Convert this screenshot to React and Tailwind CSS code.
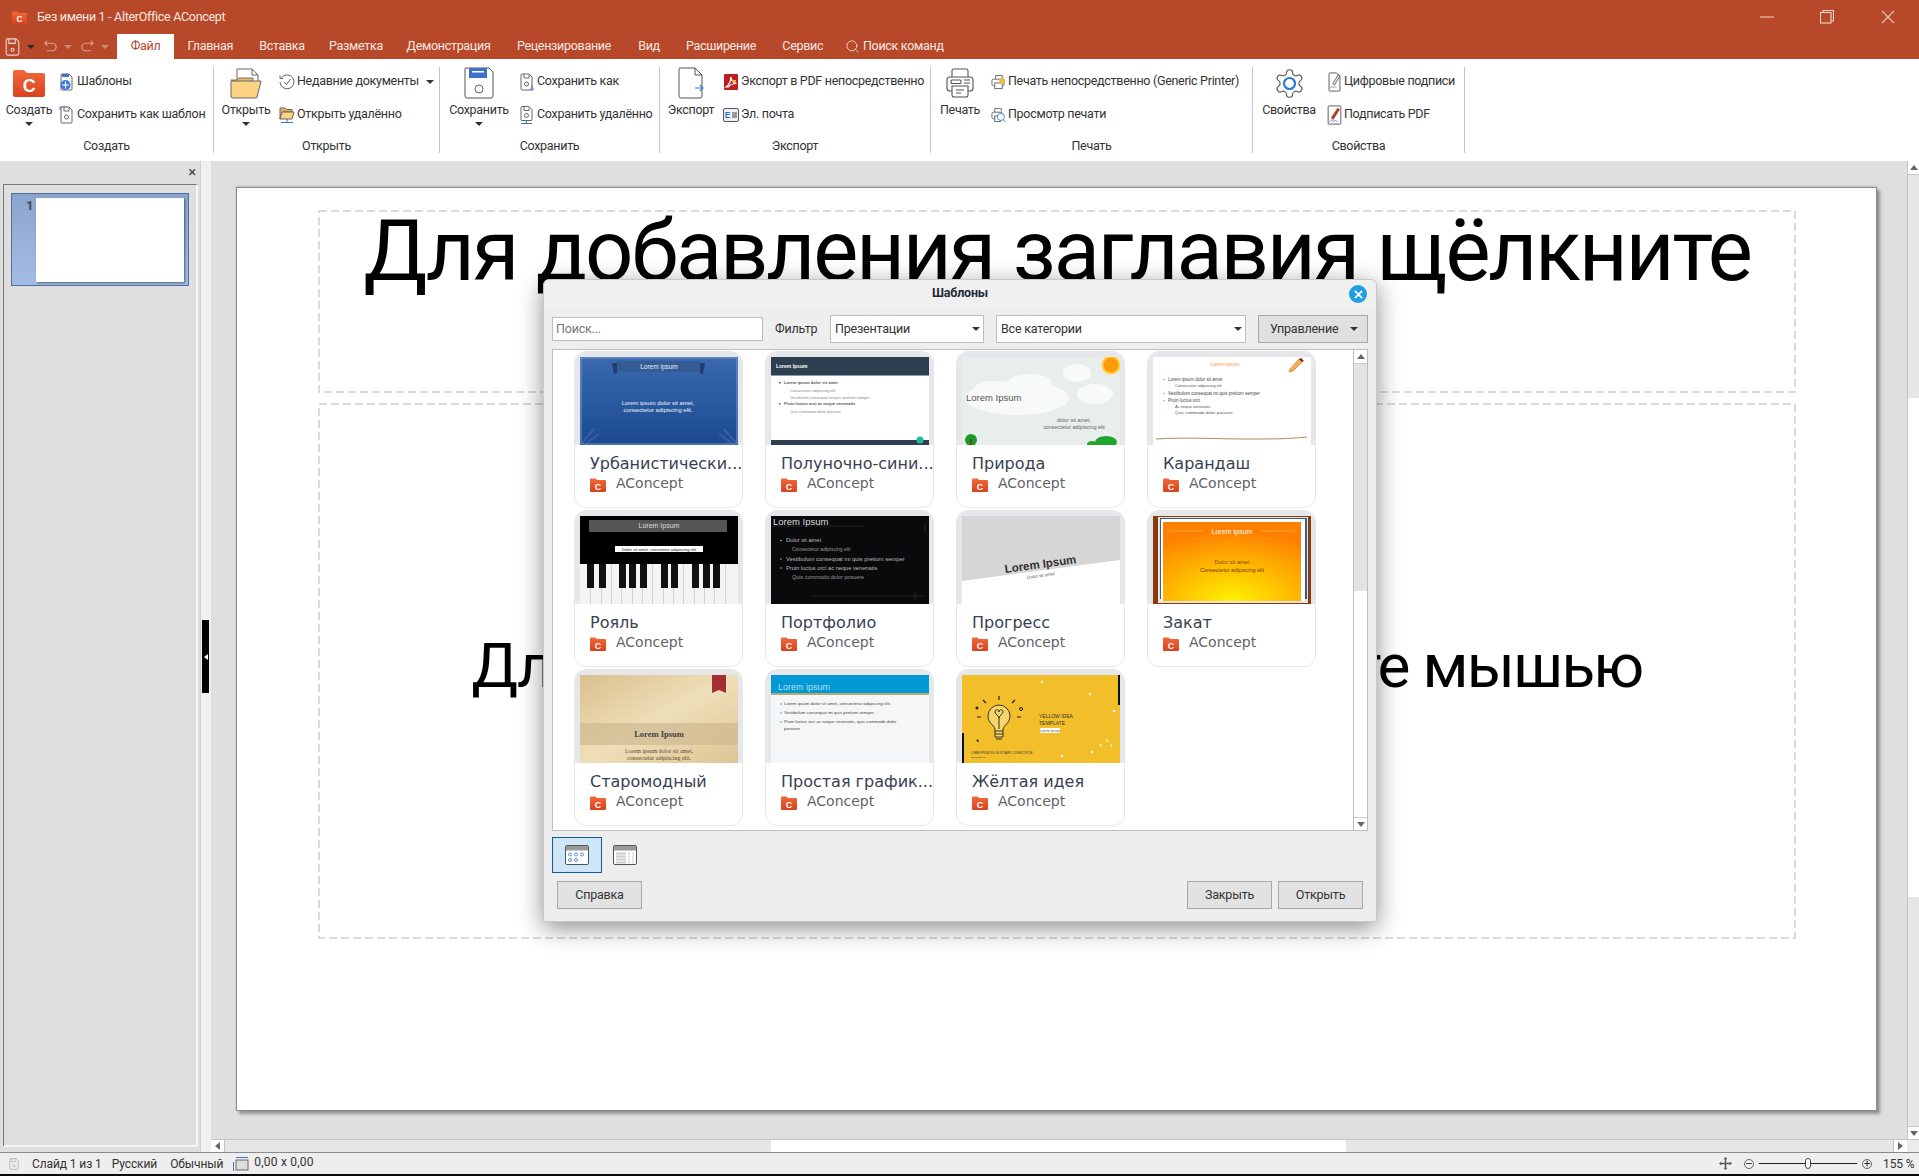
import React, { useId } from "react";
import { Search } from "lucide-react";

// ---------- icons ----------
const Logo = ({ className }) => {
  const id = useId();
  return (
    <svg viewBox="0 0 32 28" className={className}>
      <defs>
        <linearGradient id={id} x1="0" y1="0" x2="0" y2="1">
          <stop offset="0" stopColor="#f0693a" />
          <stop offset="1" stopColor="#d9421d" />
        </linearGradient>
      </defs>
      <path d="M0 3a2 2 0 0 1 2-2h9l3 3h16a2 2 0 0 1 2 2v20a2 2 0 0 1-2 2H2a2 2 0 0 1-2-2z" fill={`url(#${id})`} />
      <text x="16" y="23" textAnchor="middle" fontSize="18" fontWeight="700" fill="#fff" fontFamily="Liberation Sans, sans-serif">C</text>
    </svg>
  );
};

const Caret = ({ className = "" }) => (
  <span className={`inline-block w-0 h-0 border-x-[4px] border-x-transparent border-t-[4px] border-t-[#333] ${className}`} />
);

const SaveSmall = ({ stroke = "#fff", className }) => (
  <svg viewBox="0 0 16 20" className={className} fill="none" stroke={stroke} strokeWidth="1.2">
    <path d="M2 1h10l3 3v13a2 2 0 0 1-2 2H3a2 2 0 0 1-2-2V2a1 1 0 0 1 1-1z" />
    <path d="M4 1v5h7V1" />
    <circle cx="8" cy="13" r="1.7" />
  </svg>
);

const UndoIcon = ({ flip }) => (
  <svg viewBox="0 0 16 14" className={`w-[15px] h-[14px] ${flip ? "-scale-x-100" : ""}`} fill="none" stroke="#dd9c87" strokeWidth="1.3">
    <path d="M2 3h8a4 4 0 0 1 0 8H4" />
    <path d="M4.5 0.5 2 3l2.5 2.5" />
  </svg>
);

const BigSave = () => (
  <svg viewBox="0 0 30 32" className="w-[30px] h-[32px]">
    <path d="M2 1h23l4 4v24a2 2 0 0 1-2 2H3a2 2 0 0 1-2-2V2a1 1 0 0 1 1-1z" fill="#fff" stroke="#555" />
    <rect x="5" y="1" width="18" height="10" fill="#3f72c8" />
    <rect x="8" y="4" width="12" height="1.5" fill="#fff" />
    <circle cx="15" cy="22" r="4" fill="#fff" stroke="#666" />
  </svg>
);

const BigOpen = () => (
  <svg viewBox="0 0 32 32" className="w-[32px] h-[32px]">
    <path d="M7 24V2h15l6 6v16z" fill="#fff" stroke="#666" />
    <path d="M22 2v6h6" fill="none" stroke="#666" />
    <path d="M1 13h6l2-2h14v4H6z" fill="#eab868" stroke="#777" />
    <path d="M1 30V14l23 0 7 0-4 16a1 1 0 0 1-1 1H3z" fill="#fcd381" stroke="#666" />
  </svg>
);

const BigExport = () => (
  <svg viewBox="0 0 26 32" className="w-[26px] h-[32px]">
    <path d="M3 1h14l7 7v21a2 2 0 0 1-2 2H3a2 2 0 0 1-2-2V2a1 1 0 0 1 1-1z" fill="#fff" stroke="#555" />
    <path d="M17 1v7h7" fill="none" stroke="#555" />
    <path d="M17 21h8M22 18l3 3-3 3" fill="none" stroke="#2f7de0" strokeWidth="1.2" />
  </svg>
);

const BigPrint = () => (
  <svg viewBox="0 0 28 32" className="w-[28px] h-[32px]" fill="#fff" stroke="#555" strokeWidth="1.1">
    <path d="M6 10V4a2 2 0 0 1 2-2h12a2 2 0 0 1 2 2v6" />
    <rect x="1" y="10" width="26" height="14" rx="3" />
    <rect x="5" y="13" width="10" height="3.5" rx="1" />
    <path d="M18 13h6M18 16h6" />
    <path d="M6 19v9a2 2 0 0 0 2 2h12a2 2 0 0 0 2-2v-9z" />
    <path d="M10 23h8M10 26h5" />
  </svg>
);

const BigGear = () => (
  <svg viewBox="0 0 24 24" className="w-[33px] h-[33px]" fill="none">
    <path
      d="M12.22 2h-.44a2 2 0 0 0-2 2v.18a2 2 0 0 1-1 1.73l-.43.25a2 2 0 0 1-2 0l-.15-.08a2 2 0 0 0-2.73.73l-.22.38a2 2 0 0 0 .73 2.73l.15.1a2 2 0 0 1 1 1.72v.51a2 2 0 0 1-1 1.74l-.15.09a2 2 0 0 0-.73 2.73l.22.38a2 2 0 0 0 2.73.73l.15-.08a2 2 0 0 1 2 0l.43.25a2 2 0 0 1 1 1.73V20a2 2 0 0 0 2 2h.44a2 2 0 0 0 2-2v-.18a2 2 0 0 1 1-1.73l.43-.25a2 2 0 0 1 2 0l.15.08a2 2 0 0 0 2.73-.73l.22-.39a2 2 0 0 0-.73-2.73l-.15-.08a2 2 0 0 1-1-1.74v-.5a2 2 0 0 1 1-1.74l.15-.09a2 2 0 0 0 .73-2.73l-.22-.38a2 2 0 0 0-2.73-.73l-.15.08a2 2 0 0 1-2 0l-.43-.25a2 2 0 0 1-1-1.73V4a2 2 0 0 0-2-2z"
      stroke="#555"
      strokeWidth="0.8"
    />
    <circle cx="12" cy="12" r="4" stroke="#2f7ad6" strokeWidth="1.6" />
  </svg>
);

const SmDoc = ({ children }) => (
  <svg viewBox="0 0 16 18" className="w-[16px] h-[18px]">
    {children}
  </svg>
);
const Page = () => <path d="M3 1h7l3 3v12a1 1 0 0 1-1 1H3a1 1 0 0 1-1-1V2a1 1 0 0 1 1-1z" fill="#fff" stroke="#666" />;

const smallIcons = {
  templates: (
    <SmDoc>
      <Page />
      <rect x="3" y="1" width="7" height="3" fill="#3f72c8" />
      <circle cx="6.5" cy="12" r="5" fill="#3a78d8" />
      <path d="M6.5 8.5v7M3 12h7" stroke="#fff" strokeWidth="1.2" />
    </SmDoc>
  ),
  saveTpl: (
    <SmDoc>
      <path d="M1 4V1h7" fill="none" stroke="#3f72c8" />
      <Page />
      <path d="M5 1v4h5V2" fill="none" stroke="#666" />
      <circle cx="7.5" cy="11" r="2" fill="none" stroke="#666" />
    </SmDoc>
  ),
  recent: (
    <svg viewBox="0 0 16 18" className="w-[16px] h-[18px]" fill="none" stroke="#666">
      <path d="M2.5 4.5A7 7 0 1 1 1 9" />
      <path d="M1 2.5v3h3" />
      <path d="M5 9l2.5 2.5L11.5 6" />
    </svg>
  ),
  openRemote: (
    <svg viewBox="0 0 16 18" className="w-[16px] h-[18px]">
      <path d="M1 13V2h5l1.5 1.5H13V6H4z" fill="#e8b25e" stroke="#666" />
      <path d="M1 13l2-7h12l-2 7z" fill="#fcd381" stroke="#666" />
      <path d="M8 13v3M2 16.5h12" stroke="#3f72c8" />
    </svg>
  ),
  saveAs: (
    <SmDoc>
      <Page />
      <path d="M5 1v4h5V2" fill="none" stroke="#666" />
      <circle cx="7.5" cy="11" r="2" fill="none" stroke="#666" />
      <path d="M13 12v5M11 15.5 13 17.5l2-2" fill="none" stroke="#3f72c8" />
    </SmDoc>
  ),
  saveRemote: (
    <SmDoc>
      <path d="M3 0.5h7l3 3v10a1 1 0 0 1-1 1H3a1 1 0 0 1-1-1v-12a1 1 0 0 1 1-1z" fill="#fff" stroke="#666" />
      <path d="M5 .5v4h5v-3" fill="none" stroke="#666" />
      <circle cx="7.5" cy="9.5" r="2" fill="none" stroke="#666" />
      <path d="M7.5 15v2M2 17.5h11" stroke="#3f72c8" />
    </SmDoc>
  ),
  pdf: (
    <svg viewBox="0 0 16 18" className="w-[16px] h-[18px]">
      <rect x="1" y="1" width="14" height="16" rx="1" fill="#bd1e1e" />
      <path d="M3 14c3-2 5-6 4.5-10 1 3 3 6 6 6.5-3 0-6 1-8 3.500z" fill="none" stroke="#fff" strokeWidth="1.2" />
      <rect x="9" y="7" width="4" height="2" fill="#f0b040" />
    </svg>
  ),
  mail: (
    <svg viewBox="0 0 16 14" className="w-[16px] h-[14px]">
      <rect x=".5" y=".5" width="15" height="13" rx="1.5" fill="#eef1f6" stroke="#555" />
      <text x="4.500" y="10" fontSize="8.5" fontWeight="700" fill="#2f6fd0" textAnchor="middle" fontFamily="Liberation Sans, sans-serif">E</text>
      <rect x="9" y="4" width="5" height="6" fill="#999" />
    </svg>
  ),
  printNow: (
    <svg viewBox="0 0 16 18" className="w-[15px] h-[18px]" fill="#fff" stroke="#666">
      <path d="M5 6V2h7v4" />
      <rect x="1" y="6" width="13" height="7" rx="1.500" />
      <rect x="4" y="10" width="8" height="6" />
      <circle cx="12" cy="8" r="3.200" fill="#f4b740" stroke="none" />
    </svg>
  ),
  preview: (
    <svg viewBox="0 0 16 18" className="w-[15px] h-[18px]" fill="#fff" stroke="#666">
      <path d="M4 6V2h7v3" />
      <rect x="1" y="6" width="11" height="7" rx="1.500" />
      <rect x="4" y="10" width="6" height="6" />
      <circle cx="10.500" cy="11" r="3.800" stroke="#3f86d8" />
      <path d="M13 14l2.500 2.500" stroke="#3f86d8" />
    </svg>
  ),
  signature: (
    <svg viewBox="0 0 14 22" className="w-[13px] h-[20px]">
      <path d="M2 1h7l4 3v16a1 1 0 0 1-1 1H2a1 1 0 0 1-1-1V2a1 1 0 0 1 1-1z" fill="#fff" stroke="#555" />
      <path d="M5 13 11 3l2 1.500L7 14.500z" fill="#ddd" stroke="#555" strokeWidth=".8" />
      <path d="M2 18c1-2 2-3 2.500-2s1 2 2 .5 1 .5 2.500.5" fill="none" stroke="#3f72c8" strokeWidth=".8" />
    </svg>
  ),
  signPdf: (
    <svg viewBox="0 0 15 22" className="w-[15px] h-[20px]">
      <rect x=".5" y="1" width="14" height="20" rx="1" fill="#fff" stroke="#555" />
      <path d="M4 14 11 3.500l2 1.500L6 16z" fill="#c83a2c" stroke="#7a1c12" strokeWidth=".6" />
      <path d="M2 19c1-2 2-3 3-2s1 2 2 .5 2 .5 4 .5" fill="none" stroke="#3f72c8" strokeWidth=".8" />
    </svg>
  ),
};

const ViewGrid = () => (
  <svg viewBox="0 0 24 20" className="w-[24px] h-[20px]">
    <rect x=".5" y=".5" width="23" height="19" rx="1.500" fill="#fff" stroke="#555" />
    <rect x="1" y="1" width="22" height="4.500" fill="#9a9a9a" />
    {[5, 11, 17].map((x) => (
      <circle key={x} cx={x} cy="9.500" r="1.500" fill="none" stroke="#2f6fd0" strokeWidth=".8" />
    ))}
    {[5, 11].map((x) => (
      <circle key={x} cx={x} cy="15" r="1.500" fill="none" stroke="#2f6fd0" strokeWidth=".8" />
    ))}
  </svg>
);

const ViewList = () => (
  <svg viewBox="0 0 24 20" className="w-[24px] h-[20px]">
    <rect x=".5" y=".5" width="23" height="19" rx="1.500" fill="#fff" stroke="#555" />
    <rect x="1" y="1" width="22" height="4.500" fill="#9a9a9a" />
    {[7.5, 10.5, 13.5, 16.5].map((y) => (
      <g key={y}>
        <rect x="3" y={y} width="10" height="2" fill="#ccc" />
        <rect x="15" y={y} width="2" height="2" fill="#ddd" />
        <rect x="19" y={y} width="2" height="2" fill="#ddd" />
      </g>
    ))}
  </svg>
);

// ---------- template thumbnails, drawn as small pictures ----------
const Thumb = ({ children }) => (
  <svg viewBox="0 0 158 88" className="w-[158px] h-[88px] block font-['Liberation_Sans',sans-serif]">
    {children}
  </svg>
);

const T = ({ x, y, s = 4, c = "#444", a, w, f, r, children }) => (
  <text x={x} y={y} fontSize={s} fill={c} textAnchor={a} fontWeight={w} fontFamily={f} transform={r}>
    {children}
  </text>
);

const UrbanThumb = () => {
  const id = useId();
  return (
    <Thumb>
      <defs>
        <linearGradient id={id} x1="0" y1="0" x2="0" y2="1">
          <stop offset="0" stopColor="#3a69b0" />
          <stop offset="1" stopColor="#1c4a90" />
        </linearGradient>
      </defs>
      <rect width="158" height="88" fill={`url(#${id})`} />
      <rect x="1" y="1" width="156" height="86" fill="none" stroke="#7d9bcb" />
      <rect x="37" y="4" width="83" height="11" fill="#345c94" />
      <path d="M32 6h5v10l-3 1zM125 6h-5v10l3 1z" fill="#1f3f70" />
      <T x="79" y="11.500" s="6.500" c="#e8eef8" a="middle">Lorem ipsum</T>
      <T x="78" y="48" s="5.900" c="#f0f4fb" a="middle">Lorem ipsum dolor sit amet,</T>
      <T x="78" y="55" s="5.900" c="#f0f4fb" a="middle">consectetur adipiscing elit.</T>
      <path d="M1 87 14 72M5 87l14-10M157 87 144 72M153 87l-14-10" stroke="#4a74b0" strokeWidth="2" opacity=".5" />
    </Thumb>
  );
};

const MidnightThumb = () => (
  <Thumb>
    <rect width="158" height="88" fill="#fff" />
    <rect width="158" height="18" fill="#2c3e50" />
    <rect y="18" width="158" height="1" fill="#8b98a5" />
    <T x="5" y="11" s="5" c="#fff" w="700">Lorem Ipsum</T>
    <rect x="8" y="25" width="1.500" height="1.500" fill="#555" />
    <T x="13" y="27" s="4.100" c="#555" w="700">Lorem ipsum dolor sit amet</T>
    <T x="19" y="34.500" s="3.900" c="#888">Consectetur adipiscing elit</T>
    <T x="19" y="41.500" s="3.900" c="#888">Vestibulum consequat mi quis pretium semper</T>
    <rect x="8" y="46" width="1.500" height="1.500" fill="#555" />
    <T x="13" y="48" s="4.100" c="#555" w="700">Proin luctus orci ac neque venenatis</T>
    <T x="19" y="56" s="3.900" c="#888">Quis commodo dolor posuere</T>
    <rect y="83" width="158" height="5" fill="#2c3e50" />
    <circle cx="149" cy="83" r="3.500" fill="#1abc9c" />
  </Thumb>
);

const NatureThumb = () => (
  <Thumb>
    <rect width="158" height="88" fill="#e8eeec" />
    <g fill="#f8fafa">
      <ellipse cx="55" cy="41" rx="52" ry="17" />
      <ellipse cx="30" cy="32" rx="18" ry="8" />
      <ellipse cx="68" cy="26" rx="22" ry="9" />
      <ellipse cx="115" cy="16" rx="14" ry="9" />
      <ellipse cx="133" cy="37" rx="18" ry="10" />
    </g>
    <circle cx="149" cy="8" r="9.500" fill="#ffd43a" />
    <circle cx="149" cy="8" r="7.500" fill="#ff9a0a" />
    <circle cx="9" cy="83" r="6" fill="#1f9a2a" />
    <rect x="8" y="82" width="1.500" height="6" fill="#6a3a10" />
    <ellipse cx="144" cy="85" rx="11" ry="6" fill="#22a52c" />
    <ellipse cx="130" cy="87" rx="5" ry="3" fill="#22a52c" />
    <T x="4" y="44" s="9.500" c="#555">Lorem Ipsum</T>
    <T x="112" y="65" s="5.400" c="#666" a="middle">dolor sit amet,</T>
    <T x="112" y="72" s="5.400" c="#666" a="middle">consectetur adipiscing elit</T>
  </Thumb>
);

const PencilThumb = () => (
  <Thumb>
    <rect width="158" height="88" fill="#fff" />
    <T x="72" y="9" s="5" c="#f59242" a="middle">Lorem ipsum</T>
    <T x="15" y="23.500" s="4.500">Lorem ipsum dolor sit amet</T>
    <T x="22" y="29.500" s="4" c="#555">Consectetur adipiscing elit</T>
    <T x="15" y="37.500" s="4.500">Vestibulum consequat mi quis pretium semper</T>
    <T x="15" y="44.500" s="4.500">Proin luctus orci</T>
    <T x="22" y="50.500" s="4" c="#555">Ac neque venenatis</T>
    <T x="22" y="57" s="4.400" c="#555">Quis commodo dolor posuere</T>
    {[22.5, 36.5, 43.500].map((y) => (
      <circle key={y} cx="11" cy={y} r=".8" fill="#f59242" />
    ))}
    <path d="M3 82c30-2 60 0 90 0s40 0 61-2" stroke="#b08a60" strokeWidth="1" fill="none" />
    <path d="M137 12 146 2l3 3-9 9-4 1z" fill="#f5b04a" stroke="#a85a20" strokeWidth=".5" />
    <path d="M146 2l2-1 3 3-2 1z" fill="#7a1f1f" />
  </Thumb>
);

const PianoThumb = () => (
  <Thumb>
    <rect width="158" height="48" fill="#000" />
    <rect x="9" y="4" width="138" height="12" fill="#555" />
    <T x="79" y="12" s="7" c="#ddd" a="middle">Lorem Ipsum</T>
    <rect x="35" y="30" width="88" height="6" fill="#fff" />
    <T x="79" y="34.800" s="4.200" c="#222" a="middle">Dolor sit amet, consetetur adipiscing elit</T>
    <rect y="48" width="158" height="40" fill="#f4f4f4" />
    {[10, 21, 31, 41, 52, 62, 72, 83, 93, 103, 114, 124, 134, 145].map((x) => (
      <rect key={x} x={x} y="48" width=".6" height="40" fill="#bbb" />
    ))}
    {[7, 19, 39, 49, 60, 81, 91, 112, 123, 133].map((x) => (
      <rect key={x} x={x} y="48" width="7" height="24" fill="#111" />
    ))}
  </Thumb>
);

const PortfolioThumb = () => (
  <Thumb>
    <rect width="158" height="88" fill="#0a0a0d" />
    <T x="2" y="9" s="9.500" c="#ddd">Lorem Ipsum</T>
    <path d="M2 10h92M154 8v9M42 80h112M144 75v9" stroke="#333" strokeWidth=".6" />
    <T x="15" y="26" s="5.700" c="#bbb">Dolor sit amet</T>
    <T x="21" y="35" s="5" c="#999">Consectetur adipiscing elit</T>
    <T x="15" y="44.500" s="5.800" c="#bbb">Vestibulum consequat mi quis pretium semper</T>
    <T x="15" y="53.500" s="5.700" c="#bbb">Proin luctus orci ac neque venenatis</T>
    <T x="21" y="63" s="5.500" c="#999">Quis commodo dolor posuere</T>
    {[24.5, 43, 52].map((y) => (
      <circle key={y} cx="10" cy={y} r=".8" fill="#bbb" />
    ))}
  </Thumb>
);

const ProgressThumb = () => (
  <Thumb>
    <rect width="158" height="88" fill="#fff" />
    <path d="M0 0h158v44L0 65z" fill="#d6d6d6" />
    <T x="79" y="52" s="11.500" c="#333" a="middle" w="700" r="rotate(-8 79 52)">Lorem Ipsum</T>
    <T x="79" y="61" s="4.500" c="#555" a="middle" r="rotate(-8 79 61)">Dolor sit amet</T>
  </Thumb>
);

const SunsetThumb = () => {
  const id = useId();
  return (
    <Thumb>
      <defs>
        <radialGradient id={id} cx=".5" cy="1" r=".9">
          <stop offset="0" stopColor="#fff200" />
          <stop offset="1" stopColor="#ff7f00" />
        </radialGradient>
      </defs>
      <rect width="158" height="88" fill="#8a3a0e" />
      <rect x="5" y="1" width="150" height="86" fill="#e9e2d8" />
      <rect x="7" y="2" width="147" height="81" fill="#2f5d94" />
      <rect x="8" y="3" width="144" height="82" fill="#fff" />
      <rect x="9" y="5" width="143" height="80" fill="#fff" />
      <rect x="10" y="6" width="138" height="79" fill={`url(#${id})`} />
      <path d="M16 15h34M108 15h34" stroke="#f9c070" strokeWidth=".6" />
      <T x="79" y="17.500" s="7" c="#fff" a="middle">Lorem Ipsum</T>
      <T x="79" y="48" s="5.700" c="#7a4a10" a="middle">Dolor sit amet</T>
      <T x="79" y="55.500" s="5.500" c="#6a3a10" a="middle">Consectetur adipiscing elit</T>
    </Thumb>
  );
};

const OldThumb = () => {
  const id = useId();
  return (
    <Thumb>
      <defs>
        <linearGradient id={id} x1="0" y1="0" x2="1" y2="1">
          <stop offset="0" stopColor="#d9c08e" />
          <stop offset=".5" stopColor="#efdfb8" />
          <stop offset="1" stopColor="#dcc594" />
        </linearGradient>
      </defs>
      <rect width="158" height="88" fill={`url(#${id})`} />
      <rect y="48" width="158" height="22" fill="#cdb78f" opacity=".65" />
      <path d="M132 0h14v18l-7-3-7 3z" fill="#a32f35" />
      <T x="79" y="62" s="8.500" c="#444" a="middle" w="700" f="Liberation Serif, serif">Lorem Ipsum</T>
      <T x="79" y="78" s="6" c="#5a4a30" a="middle" f="Liberation Serif, serif">Lorem ipsum dolor sit amet,</T>
      <T x="79" y="85" s="6" c="#5a4a30" a="middle" f="Liberation Serif, serif">consectetur adipiscing elit.</T>
    </Thumb>
  );
};

const SimpleThumb = () => (
  <Thumb>
    <rect width="158" height="88" fill="#f5f6f7" />
    <rect width="158" height="18" fill="#0099d6" />
    <rect y="18" width="158" height="2" fill="#b7ab6c" />
    <T x="7" y="15" s="9" c="#b8dff2">Lorem ipsum</T>
    <T x="13" y="30" s="4.400">Lorem ipsum dolor sit amet, consectetur adipiscing elit.</T>
    <T x="13" y="39" s="4.400">Vestibulum consequat mi quis pretium semper.</T>
    <T x="13" y="48" s="4.400">Proin luctus orci ac neque venenatis, quis commodo dolor</T>
    <T x="13" y="55" s="4.400">posuere.</T>
    {[29, 38, 47].map((y) => (
      <circle key={y} cx="10" cy={y} r=".7" fill="#0099d6" />
    ))}
  </Thumb>
);

const YellowThumb = () => (
  <Thumb>
    <rect width="158" height="88" fill="#f2bf2a" />
    <rect x="156" width="2" height="30" fill="#111" />
    <rect y="58" width="2" height="30" fill="#111" />
    <g fill="none" stroke="#222" strokeWidth=".9">
      <path d="M33 62V54c-1-4-7-6-7-13a11 11 0 0 1 22 0c0 7-6 9-7 13v8z" fill="#f7d568" />
      <path d="M33 56h8M33 59h8M34 64h6" />
      <path d="M37 54V42M33 37c0-3 4-3 4 0 0-3 4-3 4 0 0 2-4 4-4 6-0-2-4-4-4-6z" />
      <path d="M37 25v-4M24 28l-3-3M50 28l3-3M19 42h-4M55 42h4" strokeWidth="1.200" />
    </g>
    <circle cx="15" cy="33" r="1.500" fill="#222" />
    <circle cx="59" cy="34" r="1.500" fill="none" stroke="#222" />
    <path d="M14 66l2-2 1 3z" fill="#222" />
    <T x="77" y="43" s="5" c="#333">YELLOW IDEA</T>
    <T x="77" y="50" s="5" c="#333">TEMPLATE</T>
    <rect x="78" y="53" width="20" height="5" rx="1" fill="#fff" />
    <T x="88" y="56.800" s="3.400" c="#555" a="middle">Lorem Ipsum</T>
    <T x="9" y="79" s="2.600" c="#333">LOREM IPSUM DOLOR SIT AMET, CONSECTETUR</T>
    <T x="9" y="82.500" s="2.400" c="#333">adipiscing elit</T>
    <g fill="#fff">
      <circle cx="80" cy="7" r="1.200" />
      <circle cx="128" cy="19" r="1.200" />
      <circle cx="152" cy="36" r="1.200" />
      <circle cx="130" cy="77" r="1.200" />
      <circle cx="100" cy="81" r="1.200" />
      <path d="M138 69l1 3M145 64l0 3M150 69l-1 3" stroke="#fff" />
    </g>
  </Thumb>
);

const templates = [
  ["Урбанистически...", UrbanThumb],
  ["Полуночно-сини...", MidnightThumb],
  ["Природа", NatureThumb],
  ["Карандаш", PencilThumb],
  ["Рояль", PianoThumb],
  ["Портфолио", PortfolioThumb],
  ["Прогресс", ProgressThumb],
  ["Закат", SunsetThumb],
  ["Старомодный", OldThumb],
  ["Простая график...", SimpleThumb],
  ["Жёлтая идея", YellowThumb],
];

const TemplateCard = ({ name, Pic }) => (
  <div className="w-[169px] h-[157px] rounded-[12px] border border-[#e5e7eb] bg-white overflow-hidden font-['DejaVu_Sans',sans-serif]">
    <div className="h-[93px] bg-[#e5e7eb] px-[5px] pt-[5px]">
      <Pic />
    </div>
    <div className="mt-[9px] pl-[15px] text-[16px] leading-[20px] text-[#374151] whitespace-nowrap">{name}</div>
    <div className="flex items-center mt-[-1px] pl-[15px] text-[14px] leading-[20px] text-[#5f6368]">
      <Logo className="w-[16px] h-[14px] mt-[4px]" />
      <span className="ml-[10px]">AConcept</span>
    </div>
  </div>
);

// ---------- ribbon ----------
const tabs = [
  ["Главная", "w-[72.5px]"],
  ["Вставка", "w-[71px]"],
  ["Разметка", "w-[77px]"],
  ["Демонстрация", "w-[108px]"],
  ["Рецензирование", "w-[123px]"],
  ["Вид", "w-[47px]"],
  ["Расширение", "w-[97px]"],
  ["Сервис", "w-[66.5px]"],
];

const BigButton = ({ icon, label, caret, className }) => (
  <div className={`flex flex-col items-center shrink-0 ${className}`}>
    <div className="h-[34px] flex items-center justify-center">{icon}</div>
    <div className="mt-[2px] leading-[16px] whitespace-nowrap">{label}</div>
    {caret && <Caret className="mt-[4px]" />}
  </div>
);

const SmallItem = ({ icon, label, caret }) => (
  <div className="h-[33px] flex items-center whitespace-nowrap">
    <span className="w-[18px] flex justify-center shrink-0">{icon}</span>
    <span className="ml-[1px]">{label}</span>
    {caret && <Caret className="ml-[7px]" />}
  </div>
);

const RibbonGroup = ({ title, className, children }) => (
  <div className={`shrink-0 h-[86px] flex flex-col border-r border-[#c4c4c4] ${className}`}>
    <div className="h-[71px] flex mt-[-1px]">{children}</div>
    <div className="h-[15px] leading-[15px] mt-[1px] text-center">{title}</div>
  </div>
);

const SmallCol = ({ children }) => <div className="mt-[-1px]">{children}</div>;

const Ribbon = () => (
  <div className="h-[102px] bg-white flex pt-[8px] text-[12.5px] text-[#333] shrink-0">
    <RibbonGroup title="Создать" className="w-[214px]">
      <BigButton className="w-[58px]" caret label="Создать" icon={<Logo className="w-[32px] h-[28px]" />} />
      <SmallCol>
        <SmallItem icon={smallIcons.templates} label="Шаблоны" />
        <SmallItem icon={smallIcons.saveTpl} label="Сохранить как шаблон" />
      </SmallCol>
    </RibbonGroup>
    <RibbonGroup title="Открыть" className="w-[226px]">
      <BigButton className="w-[64px]" caret label="Открыть" icon={<BigOpen />} />
      <SmallCol>
        <SmallItem icon={smallIcons.recent} label="Недавние документы" caret />
        <SmallItem icon={smallIcons.openRemote} label="Открыть удалённо" />
      </SmallCol>
    </RibbonGroup>
    <RibbonGroup title="Сохранить" className="w-[220px]">
      <BigButton className="w-[78px]" caret label="Сохранить" icon={<BigSave />} />
      <SmallCol>
        <SmallItem icon={smallIcons.saveAs} label="Сохранить как" />
        <SmallItem icon={smallIcons.saveRemote} label="Сохранить удалённо" />
      </SmallCol>
    </RibbonGroup>
    <RibbonGroup title="Экспорт" className="w-[271px]">
      <BigButton className="w-[62px]" label="Экспорт" icon={<BigExport />} />
      <SmallCol>
        <SmallItem icon={smallIcons.pdf} label="Экспорт в PDF непосредственно" />
        <SmallItem icon={smallIcons.mail} label="Эл. почта" />
      </SmallCol>
    </RibbonGroup>
    <RibbonGroup title="Печать" className="w-[322px]">
      <BigButton className="w-[58px]" label="Печать" icon={<BigPrint />} />
      <SmallCol>
        <SmallItem icon={smallIcons.printNow} label="Печать непосредственно (Generic Printer)" />
        <SmallItem icon={smallIcons.preview} label="Просмотр печати" />
      </SmallCol>
    </RibbonGroup>
    <RibbonGroup title="Свойства" className="w-[212px]">
      <BigButton className="w-[72px]" label="Свойства" icon={<BigGear />} />
      <SmallCol>
        <SmallItem icon={smallIcons.signature} label="Цифровые подписи" />
        <SmallItem icon={smallIcons.signPdf} label="Подписать PDF" />
      </SmallCol>
    </RibbonGroup>
  </div>
);

const Select = ({ label, className }) => (
  <div className={`h-[28px] bg-white border-[1.5px] border-[#bdbdbd] flex items-center justify-between pl-[4px] pr-[3px] ${className}`}>
    <span>{label}</span>
    <Caret />
  </div>
);

const DialogButton = ({ children, className }) => (
  <div className={`h-[28px] bg-[#e2e2e2] border border-[#a8a8a8] flex items-center justify-center ${className}`}>{children}</div>
);

const Arrow = ({ dir }) => {
  const cls = {
    up: "border-x-[4px] border-x-transparent border-b-[5px] border-b-[#666]",
    down: "border-x-[4px] border-x-transparent border-t-[5px] border-t-[#666]",
    left: "border-y-[4px] border-y-transparent border-r-[5px] border-r-[#666]",
    right: "border-y-[4px] border-y-transparent border-l-[5px] border-l-[#666]",
  }[dir];
  return <span className={`w-0 h-0 ${cls}`} />;
};

const Dialog = () => (
  <div className="absolute left-[543px] top-[279px] w-[834px] h-[643px] rounded-t-[6px] rounded-b-[2px] bg-[#eeeeee] border border-[#c8c8c8] shadow-[0_6px_24px_rgba(0,0,0,0.45)] flex flex-col text-[12.5px] text-[#333] tracking-[-0.2px]">
    <div className="h-[27px] bg-[#f0f0f0] rounded-t-[6px] flex items-center justify-center relative shrink-0">
      <span className="font-bold text-[#1c2a38]">Шаблоны</span>
      <span className="absolute right-[9px] top-[5px] w-[18px] h-[18px] rounded-full bg-[#1e9fe2] flex items-center justify-center">
        <svg viewBox="0 0 10 10" className="w-[9px] h-[9px]" stroke="#fff" strokeWidth="2">
          <path d="M1 1l8 8M9 1l-8 8" />
        </svg>
      </span>
    </div>
    <div className="flex items-center h-[42px] pt-[8px] pb-[6px] pl-[8px] pr-[7px] shrink-0">
      <div className="w-[211px] h-[24px] bg-white border border-[#bdbdbd] flex items-center pl-[3px] text-[#777]">Поиск...</div>
      <span className="ml-[12px] w-[55px]">Фильтр</span>
      <Select label="Презентации" className="w-[154px]" />
      <Select label="Все категории" className="w-[250px] ml-[12px]" />
      <div className="ml-[12px] w-[110px] h-[28px] bg-[#e0e0e0] border-[1.5px] border-[#a8a8a8] flex items-center pl-[11px] pr-[9px] justify-between">
        <span>Управление</span>
        <Caret />
      </div>
    </div>
    <div className="mx-[8px] h-[482px] bg-white border border-[#bdbdbd] flex shrink-0">
      <div className="flex-1 pl-[21px] pt-[1px]">
        <div className="grid grid-cols-[repeat(4,169px)] gap-x-[22px] gap-y-[2px] tracking-normal">
          {templates.map(([name, Pic]) => (
            <TemplateCard key={name} name={name} Pic={Pic} />
          ))}
        </div>
      </div>
      <div className="w-[14px] flex flex-col border-l border-[#bdbdbd]">
        <div className="h-[14px] bg-white border-b border-[#ccc] flex items-center justify-center">
          <Arrow dir="up" />
        </div>
        <div className="h-[227px] bg-[#e3e3e3]" />
        <div className="flex-1 bg-white" />
        <div className="h-[13px] bg-white border-t border-[#ccc] flex items-center justify-center">
          <Arrow dir="down" />
        </div>
      </div>
    </div>
    <div className="flex items-center gap-[3px] mt-[6px] ml-[8px] h-[36px] shrink-0">
      <div className="w-[50px] h-[36px] bg-[#cfe5f8] border border-[#0f5ba8] flex items-center justify-center">
        <ViewGrid />
      </div>
      <div className="w-[40px] flex justify-center">
        <ViewList />
      </div>
    </div>
    <div className="flex mt-[8px] pl-[13px] pr-[13px] gap-[6px]">
      <DialogButton className="w-[85px] mr-auto">Справка</DialogButton>
      <DialogButton className="w-[85px]">Закрыть</DialogButton>
      <DialogButton className="w-[85px]">Открыть</DialogButton>
    </div>
  </div>
);

const Placeholder = ({ className, h, children }) => (
  <div className={`relative w-[1478px] ml-[81px] flex items-center justify-center font-['Roboto',sans-serif] text-black whitespace-nowrap ${className}`}>
    <svg className="absolute inset-0 w-[1478px] h-full" preserveAspectRatio="none">
      <rect x="1" y="1" width="1476" height={h - 2} fill="none" stroke="#cfcfcf" strokeWidth="1.5" strokeDasharray="8 4" />
    </svg>
    {children}
  </div>
);

const App = () => (
  <div className="relative w-[1919px] h-[1176px] overflow-hidden flex flex-col bg-[#0b0b0b] font-['Roboto',sans-serif] tracking-[-0.3px]">
    {/* title bar */}
    <div className="h-[34px] bg-[#b74829] flex items-center pl-[12px] shrink-0 text-white">
      <Logo className="w-[15px] h-[15px]" />
      <span className="ml-[10px] text-[12.5px] text-[#f7e9e4]">Без имени 1 - AlterOffice AConcept</span>
      <div className="ml-auto flex items-center">
        <span className="w-[60px] flex justify-center">
          <svg viewBox="0 0 14 14" className="w-[14px] h-[14px]" stroke="#e6b0a0" strokeWidth="1.400">
            <path d="M0 7h14" />
          </svg>
        </span>
        <span className="w-[60px] flex justify-center">
          <svg viewBox="0 0 14 14" className="w-[14px] h-[14px]" fill="none" stroke="#f3d9d0" strokeWidth="1.100">
            <rect x=".5" y="2.500" width="10.500" height="10.500" />
            <path d="M3 2.500V.5h10.500V11h-2.500" />
          </svg>
        </span>
        <span className="w-[62px] flex justify-center">
          <svg viewBox="0 0 14 14" className="w-[14px] h-[14px]" stroke="#ecc3b6" strokeWidth="1.200">
            <path d="M1 1l12 12M13 1L1 13" />
          </svg>
        </span>
      </div>
    </div>

    {/* tab row */}
    <div className="h-[25px] bg-[#b74829] flex items-center shrink-0 text-[12.5px] text-[#f7e9e4]">
      <div className="w-[117px] flex items-center pl-[5px]">
        <SaveSmall className="w-[15px] h-[18px]" stroke="#f0d5cc" />
        <span className="ml-[7px] w-0 h-0 border-x-[4px] border-x-transparent border-t-[4px] border-t-[#2b2b2b]" />
        <span className="ml-[8px]"><UndoIcon /></span>
        <span className="ml-[6px] w-0 h-0 border-x-[4px] border-x-transparent border-t-[4px] border-t-[#cf8a73]" />
        <span className="ml-[8px]"><UndoIcon flip /></span>
        <span className="ml-[6px] w-0 h-0 border-x-[4px] border-x-transparent border-t-[4px] border-t-[#cf8a73]" />
      </div>
      <div className="w-[57px] h-full bg-white text-[#b74829] flex items-center justify-center">Файл</div>
      {tabs.map(([label, w]) => (
        <div key={label} className={`${w} text-center`}>
          {label}
        </div>
      ))}
      <Search className="w-[15px] h-[15px] ml-[9px] mb-[1px]" strokeWidth={1.3} color="#f7e9e4" />
      <span className="ml-[3px] mb-[1px]">Поиск команд</span>
    </div>

    <Ribbon />

    {/* main */}
    <div className="flex h-[991px] shrink-0 bg-[#dfdfdf]">
      {/* slide sorter */}
      <div className="w-[200px] flex flex-col pb-[5px] shrink-0">
        <div className="h-[23px] flex items-center justify-end pr-[4px] text-[#444] text-[15px] leading-none">×</div>
        <div className="flex-1 ml-[3px] w-[195px] border-l border-t border-[#777] border-r-2 border-r-[#f5f5f5] border-b-2 border-b-[#f5f5f5] pt-[8px] pl-[7px]">
          <div className="w-[178px] h-[93px] border border-[#52709f] bg-gradient-to-b from-[#8aa4cc] to-[#a3bde6] flex pl-[14px] pt-[4px]">
            <span className="text-[13px] leading-[15px] font-bold text-[#3c4a60] w-[10px]">1</span>
            <div className="w-[148px] h-[84px] bg-white shadow-[1px_1px_2px_rgba(0,0,0,0.5)]" />
          </div>
        </div>
      </div>

      {/* splitter */}
      <div className="w-[11px] bg-[#f0f0f0] border-l border-[#cfcfcf] flex items-center pl-[1px] shrink-0">
        <div className="w-[7px] h-[73px] bg-black flex items-center justify-center">
          <span className="w-0 h-0 border-y-[3px] border-y-transparent border-r-[4px] border-r-white" />
        </div>
      </div>

      {/* workspace */}
      <div className="flex-1 flex flex-col min-w-0">
        <div className="flex-1 flex min-h-0">
          <div className="flex-1 pt-[26px] pl-[25px]">
            <div className="w-[1641px] h-[924px] bg-white border border-[#8a8a8a] shadow-[3px_3px_3px_rgba(0,0,0,0.35),0_-1px_2px_rgba(0,0,0,0.15)] pt-[22px]">
              <Placeholder h={183} className="h-[183px] text-[85px] leading-none tracking-[-2.25px]">
                <span className="mb-[100px]">Для добавления заглавия щёлкните</span>
              </Placeholder>
              <Placeholder h={536} className="h-[536px] mt-[10px] text-[62px] leading-none tracking-[-1.7px]">
                <span className="mb-[10px]">Для добавления текста щёлкните мышью</span>
              </Placeholder>
            </div>
          </div>
          <div className="w-[12px] flex flex-col border-l border-[#c4c4c4] shrink-0">
            <div className="h-[14px] bg-white border-b border-[#c4c4c4] flex items-center justify-center">
              <Arrow dir="up" />
            </div>
            <div className="h-[223px] bg-[#e6e6e6]" />
            <div className="flex-1 bg-white" />
            <div className="h-[229px] bg-[#e6e6e6]" />
            <div className="h-[13px] bg-white border-t border-[#c4c4c4] flex items-center justify-center">
              <Arrow dir="down" />
            </div>
          </div>
        </div>
        <div className="h-[13px] flex border-t border-[#c4c4c4] shrink-0">
          <div className="w-[14px] bg-white border-r border-[#c4c4c4] flex items-center justify-center">
            <Arrow dir="left" />
          </div>
          <div className="w-[546px] bg-[#e6e6e6]" />
          <div className="w-[575px] bg-white" />
          <div className="flex-1 bg-[#e6e6e6]" />
          <div className="w-[14px] bg-white border-l border-[#c4c4c4] flex items-center justify-center">
            <Arrow dir="right" />
          </div>
          <div className="w-[12px] bg-[#ececec]" />
        </div>
      </div>
    </div>

    {/* status bar */}
    <div className="h-[22px] bg-[#eeeeee] border-t border-[#8a8a8a] flex items-center shrink-0 text-[12px] text-[#333] tracking-[-0.1px]">
      <span className="ml-[9px]"><SaveSmall className="w-[10px] h-[12px]" stroke="#aaa" /></span>
      <span className="ml-[13px]">Слайд 1 из 1</span>
      <span className="ml-[10px]">Русский</span>
      <span className="ml-[13px]">Обычный</span>
      <svg viewBox="0 0 16 14" className="ml-[10px] w-[16px] h-[14px]" fill="none">
        <rect x="3" y="3" width="12" height="10" fill="#ddd" stroke="#666" />
        <path d="M3 .5h12M.5 5v9" stroke="#3f72c8" />
      </svg>
      <span className="ml-[5px] mb-[3px] tracking-[0.2px]">0,00 x 0,00</span>
      <div className="ml-auto flex items-center">
        <svg viewBox="0 0 14 14" className="w-[13px] h-[13px]" stroke="#555" fill="#555">
          <path d="M7 1v12M1 7h12" strokeWidth="1.500" />
          <path d="M7 0 5 2.500h4zM7 14 5 11.500h4zM0 7l2.500-2v4zM14 7l-2.500-2v4z" stroke="none" />
        </svg>
        <span className="ml-[12px] w-[10px] h-[10px] rounded-full border border-[#666] flex items-center justify-center">
          <span className="w-[6px] h-[1px] bg-[#444]" />
        </span>
        <div className="ml-[5px] w-[98px] h-[1.5px] bg-[#222] relative">
          <span className="absolute left-[46px] top-[-5px] w-[6px] h-[11px] rounded-full bg-white border border-[#444]" />
        </div>
        <span className="ml-[5px] w-[10px] h-[10px] rounded-full border border-[#666] flex items-center justify-center text-[#333] text-[11px] leading-none">+</span>
        <span className="ml-[11px] mr-[7px] text-[#333] w-[29px] whitespace-nowrap">155 %</span>
      </div>
    </div>

    <Dialog />
  </div>
);

export default App;
